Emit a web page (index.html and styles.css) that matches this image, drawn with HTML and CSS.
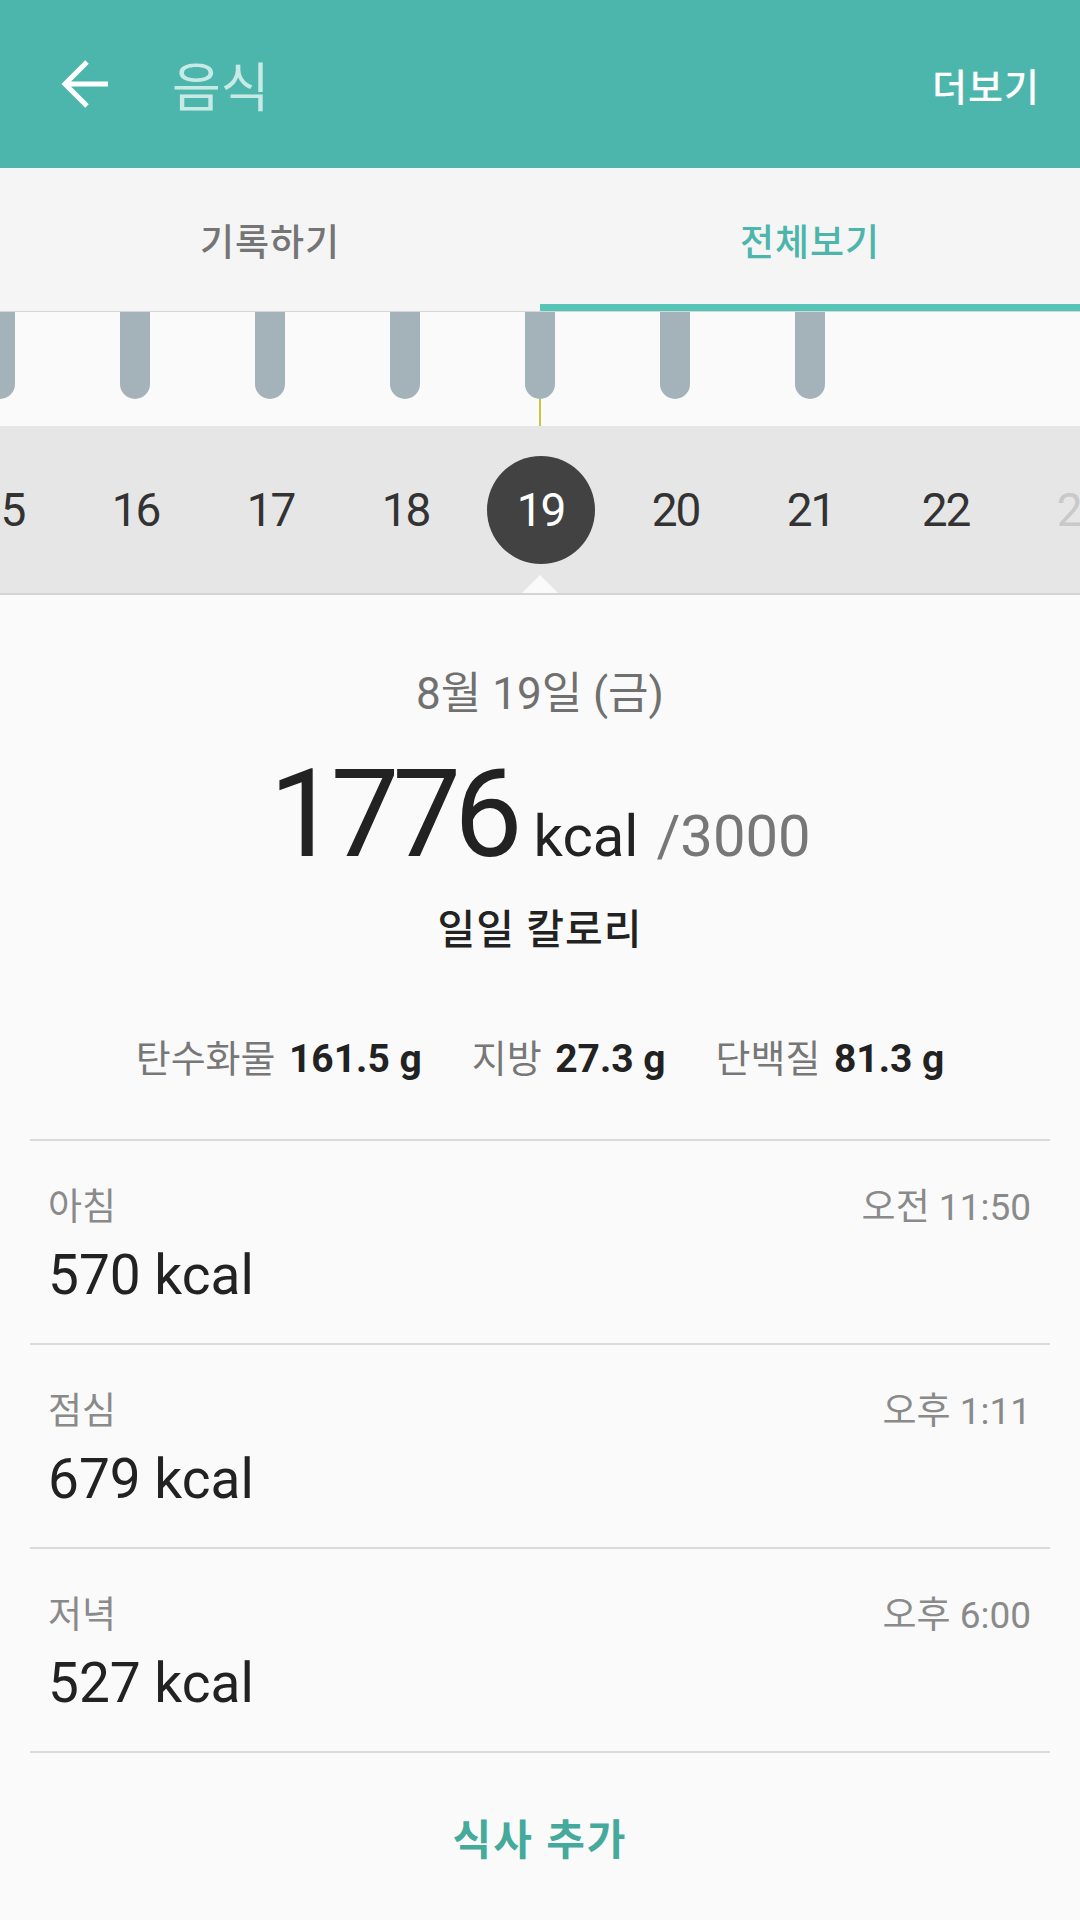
FILE: index.html
```html
<!DOCTYPE html>
<html lang="ko">
<head>
  <meta charset="UTF-8">
  <meta name="viewport" content="width=device-width, initial-scale=1.0">
  <title>음식</title>
  <link rel="stylesheet" href="styles.css">
</head>
<body>
  <header class="app-bar">
    <svg class="back" viewBox="0 0 48 48" width="48" height="48">
      <path d="M48 24H4 M27 2L5 24L27 46" fill="none" stroke="#fff" stroke-width="5"/>
    </svg>
    <h1 class="title">음식</h1>
    <a class="more" href="#">더보기</a>
  </header>

  <nav class="tabs">
    <div class="tab">기록하기</div>
    <div class="tab active">전체보기</div>
  </nav>

  <div class="chart">
    <span class="bar"></span>
    <span class="bar"></span>
    <span class="bar"></span>
    <span class="bar"></span>
    <span class="bar current"></span>
    <span class="bar"></span>
    <span class="bar"></span>
  </div>

  <div class="days">
    <div class="day">15</div>
    <div class="day">16</div>
    <div class="day">17</div>
    <div class="day">18</div>
    <div class="day selected"><span>19</span></div>
    <div class="day">20</div>
    <div class="day">21</div>
    <div class="day">22</div>
    <div class="day future">23</div>
    <i class="pointer"></i>
  </div>

  <main>
    <section class="summary">
      <p class="date">8월 19일 (금)</p>
      <p class="total"><span class="big">1776</span><span class="unit">kcal</span><span class="goal">/3000</span></p>
      <p class="caption">일일 칼로리</p>
      <p class="nutrients">
        <span>탄수화물 <b>161.5 g</b></span>
        <span>지방 <b>27.3 g</b></span>
        <span>단백질 <b>81.3 g</b></span>
      </p>
    </section>

    <ul class="meals">
      <li class="meal">
        <div class="meal-top"><span class="meal-name">아침</span><span class="meal-time">오전 11:50</span></div>
        <div class="meal-kcal">570 kcal</div>
      </li>
      <li class="meal">
        <div class="meal-top"><span class="meal-name">점심</span><span class="meal-time">오후 1:11</span></div>
        <div class="meal-kcal">679 kcal</div>
      </li>
      <li class="meal">
        <div class="meal-top"><span class="meal-name">저녁</span><span class="meal-time">오후 6:00</span></div>
        <div class="meal-kcal">527 kcal</div>
      </li>
    </ul>

    <div class="add-meal">식사 추가</div>
  </main>
</body>
</html>
```

FILE: styles.css
```css
/* Food dashboard */
body {
  font-family: Roboto, "Noto Sans CJK KR", sans-serif;
  margin: 0;
  padding: 0;
  width: 1080px;
  height: 1920px;
  overflow: hidden;
  background-color: #fafafa;
  color: #222;
}

p {
  margin: 0;
}

.app-bar {
  height: 168px;
  background-color: #4db6ac;
  display: flex;
  align-items: center;
  padding-left: 60px;
  box-sizing: border-box;
}

.title {
  margin: 0 0 0 64px;
  font-size: 53px;
  font-weight: 400;
  color: #c8eae5;
}

.more {
  margin-left: auto;
  margin-right: 40px;
  color: #fff;
  text-decoration: none;
  font-size: 38px;
  font-weight: 500;
  letter-spacing: 1px;
}

.tabs {
  height: 144px;
  display: grid;
  grid-template-columns: 1fr 1fr;
  background-color: #f5f5f5;
  border-bottom: 1px solid #d6d6d6;
  box-sizing: border-box;
}

.tab {
  display: flex;
  align-items: center;
  justify-content: center;
  font-size: 37px;
  font-weight: 500;
  color: #757575;
  letter-spacing: 1px;
}

.tab.active {
  color: #4db6ac;
  box-shadow: inset 0 -7px 0 #56c4b6;
}

.chart {
  height: 114px;
  display: flex;
  gap: 105px;
  margin-left: -15px;
  overflow: hidden;
}

.bar {
  position: relative;
  width: 30px;
  height: 87px;
  background-color: #a4b2b9;
  border-radius: 0 0 15px 15px;
  flex: none;
}

.bar.current::after {
  content: "";
  position: absolute;
  top: 100%;
  left: 14px;
  width: 2px;
  height: 27px;
  background-color: #c8c83a;
}

.days {
  position: relative;
  height: 167px;
  display: flex;
  align-items: center;
  background-color: #e6e6e6;
  border-bottom: 2px solid #d4d4d4;
  overflow: hidden;
}

.day {
  flex: none;
  width: 135px;
  text-align: center;
  font-size: 46px;
  color: #333;
  letter-spacing: -2px;
}

.day:first-child {
  margin-left: -67px;
}

.day.future {
  color: #c9c9c9;
}

.day.selected span {
  display: inline-flex;
  align-items: center;
  justify-content: center;
  width: 108px;
  height: 108px;
  border-radius: 50%;
  background-color: #424242;
  color: #fff;
}

.pointer {
  position: absolute;
  left: 520px;
  bottom: -2px;
  width: 0;
  height: 0;
  border-left: 20px solid transparent;
  border-right: 20px solid transparent;
  border-bottom: 20px solid #fafafa;
}

.summary {
  padding-top: 74px;
  text-align: center;
}

.date {
  font-size: 44px;
  line-height: 50px;
  color: #707070;
}

.total {
  margin-top: 35px;
  line-height: 140px;
  height: 140px;
}

.big {
  font-size: 122px;
  letter-spacing: -7px;
  line-height: 1;
}

.unit {
  font-size: 58px;
  line-height: 1;
  margin-left: 18px;
}

.goal {
  font-size: 58px;
  line-height: 1;
  color: #777;
  margin-left: 18px;
}

.caption {
  margin-top: 12px;
  font-size: 41px;
  line-height: 48px;
  font-weight: 500;
  letter-spacing: 1px;
}

.nutrients {
  margin-top: 83px;
  font-size: 38px;
  line-height: 44px;
  color: #777;
  display: flex;
  justify-content: center;
  gap: 50px;
}

.nutrients b {
  color: #222;
  font-size: 39px;
  font-weight: 700;
  margin-left: 4px;
}

.meals {
  list-style: none;
  margin: 58px 30px 0;
  padding: 0;
  border-top: 2px solid #dadada;
}

.meal {
  height: 204px;
  box-sizing: border-box;
  padding: 46px 19px 0 18px;
  border-bottom: 2px solid #dadada;
}

.meal-top {
  display: flex;
  justify-content: space-between;
  font-size: 37px;
  line-height: 42px;
  color: #8a8a8a;
}

.meal-kcal {
  margin-top: 14px;
  font-size: 55px;
  line-height: 64px;
  color: #222;
}

.add-meal {
  height: 166px;
  display: flex;
  align-items: center;
  justify-content: center;
  font-size: 42px;
  font-weight: 700;
  color: #45a99c;
  letter-spacing: 2px;
}
```
